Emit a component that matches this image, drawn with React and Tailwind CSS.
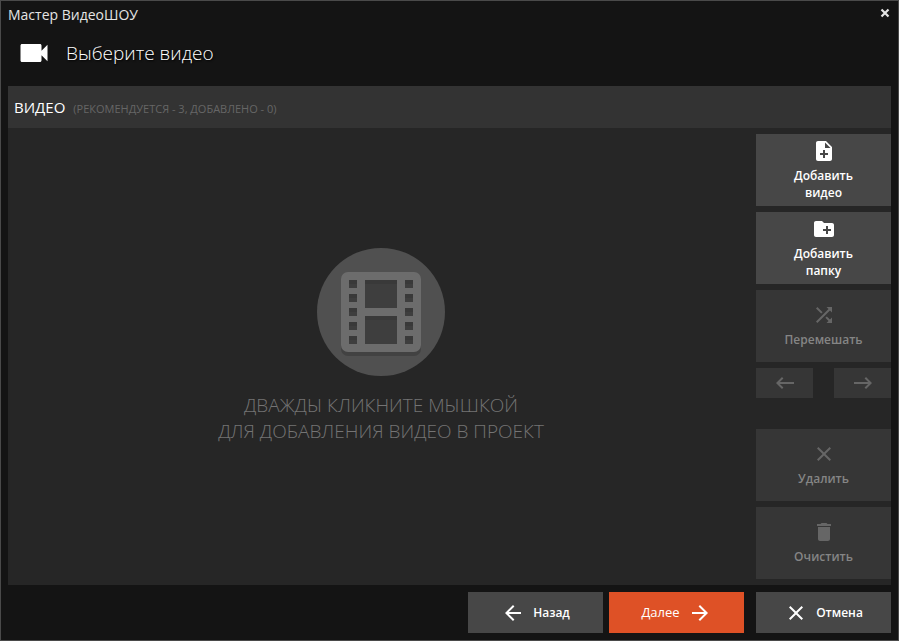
// App.jsx
// Video show wizard: header, drop area with side toolbar, navigation footer.
import React from 'react';
import clsx from 'clsx';

const ICONS = {
  videocam: 'M17 10.5V7c0-.55-.45-1-1-1H4c-.55 0-1 .45-1 1v10c0 .55.45 1 1 1h12c.55 0 1-.45 1-1v-3.5l4 4v-11l-4 4z',
  filePlus: 'M14 2H6c-1.11 0-2 .89-2 2v16c0 1.11.89 2 2 2h12c1.11 0 2-.89 2-2V8l-6-6zM13 9V3.5L18.5 9H13zM11 11h2v3h3v2h-3v3h-2v-3H8v-2h3v-3z',
  folderPlus: 'M10 4H4c-1.11 0-2 .89-2 2v12c0 1.11.89 2 2 2h16c1.11 0 2-.89 2-2V8c0-1.11-.9-2-2-2h-8l-2-2zM14 9h2v3h3v2h-3v3h-2v-3h-3v-2h3V9z',
  shuffle: 'M10.59 9.17L5.41 4 4 5.41l5.17 5.17 1.42-1.41zM14.5 4l2.04 2.04L4 18.59 5.41 20 17.96 7.46 20 9.5V4h-5.5zm.33 9.41l-1.41 1.41 3.13 3.13L14.5 20H20v-5.5l-2.04 2.04-3.13-3.13z',
  moveLeft: 'M21 11H6.83l3.58-3.59L9 6l-6 6 6 6 1.41-1.41L6.83 13H21z',
  moveRight: 'M3 11h14.17l-3.58-3.59L15 6l6 6-6 6-1.41-1.41L17.17 13H3z',
  close: 'M19 6.41L17.59 5 12 10.59 6.41 5 5 6.41 10.59 12 5 17.59 6.41 19 12 13.41 17.59 19 19 17.59 13.41 12z',
  trash: 'M6 19c0 1.1.9 2 2 2h8c1.1 0 2-.9 2-2V7H6v12zM19 4h-3.5l-1-1h-5l-1 1H5v2h14V4z',
  back: 'M20 11H7.83l5.59-5.59L12 4l-8 8 8 8 1.41-1.41L7.83 13H20v-2z',
  forward: 'M12 4l-1.41 1.41L16.17 11H4v2h12.17l-5.58 5.59L12 20l8-8z',
};

function Icon({ name, className = 'size-6' }) {
  return (
    <svg viewBox="0 0 24 24" fill="currentColor" fillRule="evenodd" aria-hidden="true" className={clsx('shrink-0', className)}>
      <path d={ICONS[name]} />
    </svg>
  );
}

const HOLES = [32, 46, 60, 74, 88];

function FilmBadge() {
  return (
    <svg viewBox="0 0 128 128" className="size-32" aria-hidden="true">
      <circle cx="64" cy="64" r="64" fill="#505050" />
      <rect x="24" y="28" width="80" height="80" rx="7" fill="#424242" />
      <rect x="24" y="24" width="80" height="80" rx="7" fill="#6c6c6c" />
      {[32, 88].map((x) =>
        HOLES.map((y) => (
          <g key={`${x}-${y}`}>
            <rect x={x} y={y} width="8" height="8" fill="#3e3e3e" />
            <rect x={x} y={y} width="8" height="4" fill="#393939" />
          </g>
        ))
      )}
      {[32, 68].map((y) => (
        <g key={y}>
          <rect x="48" y={y} width="32" height="28" fill="#3e3e3e" />
          <rect x="48" y={y} width="32" height="4" fill="#393939" />
        </g>
      ))}
    </svg>
  );
}

function ToolButton({ icon, children, disabled }) {
  return (
    <button
      type="button"
      disabled={disabled}
      className={clsx(
        'flex h-18 w-full flex-col items-center justify-center gap-1 px-8 text-[12px] leading-[17px] font-semibold',
        disabled ? 'bg-[#363636] pb-px text-[#858585]' : 'bg-[#474747] text-white hover:bg-[#525252]'
      )}
    >
      <Icon name={icon} className={clsx('size-6', disabled && 'text-[#666666]')} />
      <span className="flex justify-center">{children}</span>
    </button>
  );
}

function MoveButton({ icon, label }) {
  return (
    <button type="button" disabled aria-label={label} className="flex h-[30px] w-[57px] items-center justify-center bg-[#363636] text-[#666666]">
      <Icon name={icon} />
    </button>
  );
}

function NavButton({ className, children }) {
  return (
    <button type="button" className={clsx('flex h-[41px] w-[135px] items-center justify-center gap-2 text-white', className)}>
      {children}
    </button>
  );
}

export default function App() {
  return (
    <div className="flex min-h-screen flex-col border border-[#4a4a4a] bg-[#141414] px-[7px] pb-[7px] font-['Open_Sans','Noto_Sans',sans-serif] text-white">
      {/* Title bar */}
      <div className="flex h-[27px] items-center justify-between">
        <span className="text-sm text-[#e4e4e4]">Мастер ВидеоШОУ</span>
        <button type="button" aria-label="Закрыть" className="-mt-1 text-[#e4e4e4]">
          <svg viewBox="0 0 12 12" className="size-3" aria-hidden="true">
            <path d="M2.5 2.5l7 7M9.5 2.5l-7 7" stroke="currentColor" strokeWidth="2.2" />
          </svg>
        </button>
      </div>

      {/* Step heading */}
      <header className="flex h-[58px] items-start gap-[14px] pl-2 pt-[7px]">
        <Icon name="videocam" className="size-9" />
        <h1 className="text-[19px] leading-9 font-light [text-shadow:1px_1px_2px_#000]">Выберите видео</h1>
      </header>

      <main className="flex flex-1 flex-col bg-[#262626]">
        <div className="flex h-[42px] items-center gap-2 bg-[#333333] px-1.5">
          <h2 className="text-[15px]">ВИДЕО</h2>
          <p className="pt-1 text-[11px] font-medium text-[#666666]">(РЕКОМЕНДУЕТСЯ - 3, ДОБАВЛЕНО - 0)</p>
        </div>

        <div className="flex flex-1 gap-0.5">
          <section className="flex flex-1 flex-col items-center justify-center gap-4 pb-[22px]">
            <FilmBadge />
            <p className="text-center text-[19px] leading-[26px] font-light text-[#747474]">
              ДВАЖДЫ КЛИКНИТЕ МЫШКОЙ
              <br />
              ДЛЯ ДОБАВЛЕНИЯ ВИДЕО В ПРОЕКТ
            </p>
          </section>

          {/* Clip toolbar */}
          <aside className="flex w-[135px] flex-col gap-1.5 py-1.5">
            <ToolButton icon="filePlus">Добавить видео</ToolButton>
            <ToolButton icon="folderPlus">Добавить папку</ToolButton>
            <ToolButton icon="shuffle" disabled>Перемешать</ToolButton>
            <div className="flex justify-between">
              <MoveButton icon="moveLeft" label="Переместить влево" />
              <MoveButton icon="moveRight" label="Переместить вправо" />
            </div>
            <div className="mt-auto flex flex-col gap-1.5">
              <ToolButton icon="close" disabled>Удалить</ToolButton>
              <ToolButton icon="trash" disabled>Очистить</ToolButton>
            </div>
          </aside>
        </div>
      </main>

      <footer className="flex justify-end pt-[7px]">
        <NavButton className="mr-1.5 bg-[#474747] text-[12px] font-semibold hover:bg-[#525252]">
          <Icon name="back" />
          Назад
        </NavButton>
        <NavButton className="mr-3 bg-[#de5126] text-[13px] font-medium hover:bg-[#e8602f]">
          Далее
          <Icon name="forward" />
        </NavButton>
        <NavButton className="bg-[#474747] text-[12px] font-semibold hover:bg-[#525252]">
          <Icon name="close" />
          Отмена
        </NavButton>
      </footer>
    </div>
  );
}
